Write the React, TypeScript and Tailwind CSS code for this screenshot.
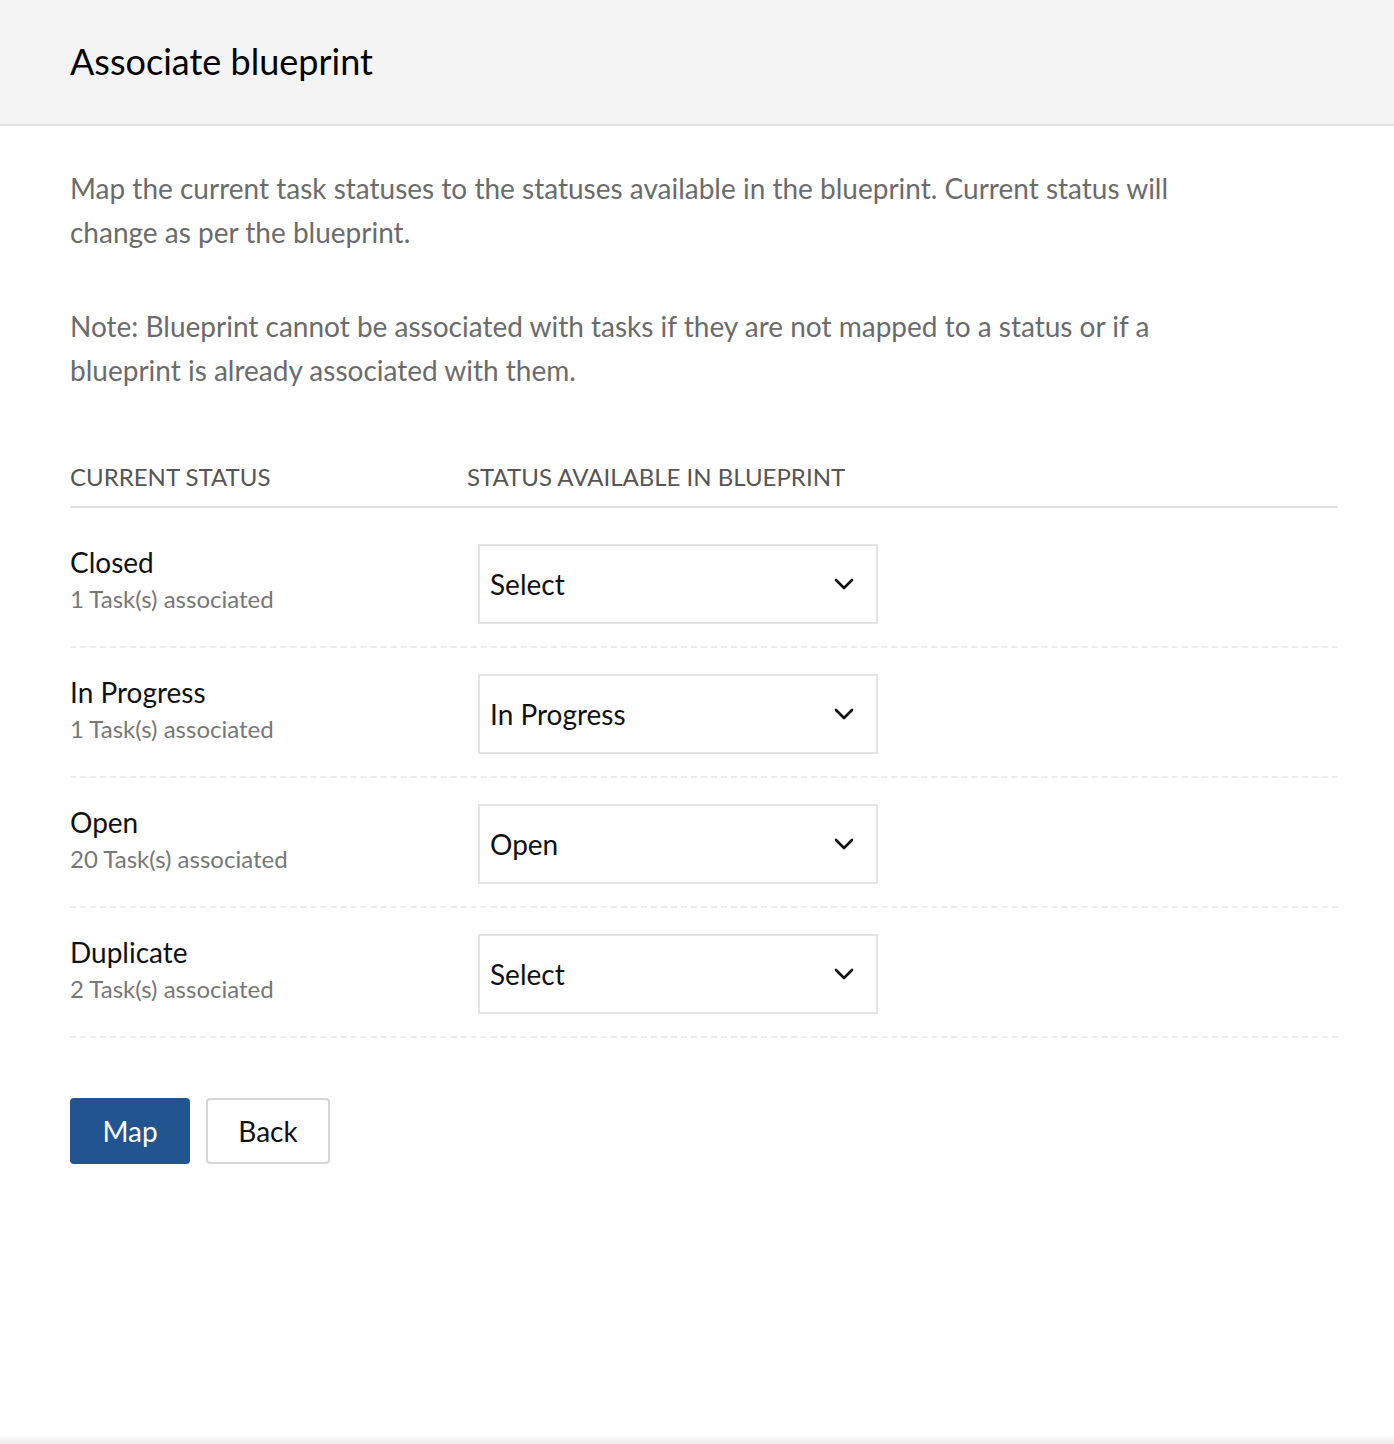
import { useState } from "react";

type Row = {
    name: string;
    count: number;
    value: string;
};

const rows: Row[] = [
    { name: "Closed", count: 1, value: "Select" },
    { name: "In Progress", count: 1, value: "In Progress" },
    { name: "Open", count: 20, value: "Open" },
    { name: "Duplicate", count: 2, value: "Select" },
];

function Chevron() {
    return (
        <svg width="20" height="12" viewBox="0 0 20 12" fill="none">
            <path d="M2 2l8 8 8-8" stroke="#111" strokeWidth="2.6" strokeLinecap="round" strokeLinejoin="round" />
        </svg>
    );
}

function StatusSelect({ value }: { value: string }) {
    return (
        <button className="w-[400px] h-[80px] border-2 border-[#e4e4e4] bg-white flex items-center justify-between pl-[10px] pr-[22px] text-[28px] text-[#111]">
            <span>{value}</span>
            <Chevron />
        </button>
    );
}

export default function App() {
    const [items] = useState(rows);

    return (
        <div className="h-[1444px] bg-white flex flex-col font-['Lato','Liberation_Sans',sans-serif]">
            <header className="h-[126px] bg-[#f4f4f4] border-b-2 border-[#e2e2e2] flex items-center px-[70px]">
                <h1 className="text-[36px] text-black leading-none pb-[2px]">Associate blueprint</h1>
            </header>

            <main className="flex-1 pl-[70px] pr-[56px] pt-[40px]">
                <p className="max-w-[1140px] text-[28px] leading-[44px] text-[#6b6b6b]">
                    Map the current task statuses to the statuses available in the blueprint. Current status will change as per the blueprint.
                </p>
                <p className="max-w-[1140px] text-[28px] leading-[44px] text-[#6b6b6b] mt-[50px]">
                    Note: Blueprint cannot be associated with tasks if they are not mapped to a status or if a blueprint is already associated with them.
                </p>

                <div className="mt-[70px] flex border-b-2 border-[#e2e2e2] pb-[14px] text-[24px] leading-[30px] text-[#555]">
                    <div className="w-[397px]">CURRENT STATUS</div>
                    <div>STATUS AVAILABLE IN BLUEPRINT</div>
                </div>

                <div className="mt-[10px]">
                    {items.map((row) => (
                        <div
                            key={row.name}
                            className="flex items-center pt-[26px] pb-[22px] border-b-2 border-dashed border-[#ececec]"
                        >
                            <div className="w-[408px] pb-[8px]">
                                <div className="text-[28px] leading-[32px] text-[#111]">{row.name}</div>
                                <div className="mt-[6px] text-[24px] leading-[30px] text-[#777]">{row.count} Task(s) associated</div>
                            </div>
                            <StatusSelect value={row.value} />
                        </div>
                    ))}
                </div>

                <div className="mt-[60px] flex gap-[16px]">
                    <button className="w-[120px] h-[66px] rounded-[4px] bg-[#22558f] text-white text-[28px]">Map</button>
                    <button className="w-[124px] h-[66px] rounded-[4px] border-2 border-[#d6d6d6] bg-white text-[#111] text-[28px]">Back</button>
                </div>
            </main>

            <div className="h-[10px] bg-gradient-to-b from-white to-[#ececec]" />
        </div>
    );
}
